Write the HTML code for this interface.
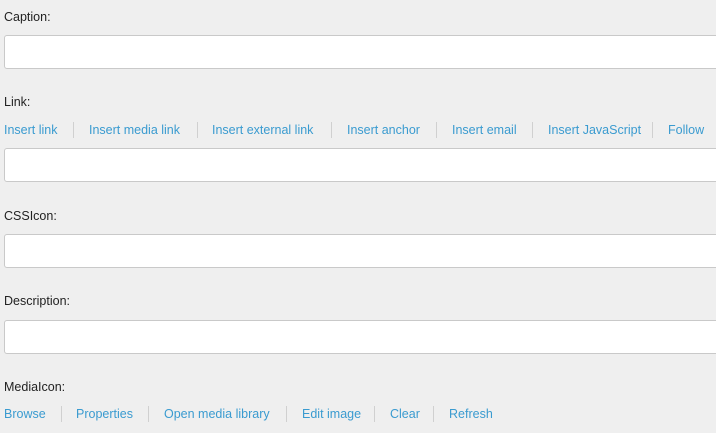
<!DOCTYPE html>
<html><head><style>
body{margin:0;width:716px;height:433px;background:#efefef;font-family:"Liberation Sans",sans-serif;font-size:12.5px;color:#222;position:relative;overflow:hidden}
.l{position:absolute;left:4px;line-height:16px}
.in{position:absolute;left:4px;width:730px;height:32px;background:#fff;border:1px solid #c9c9c9;border-radius:3px}
.a{position:absolute;color:#3a9bd0;line-height:16px;white-space:nowrap}
.s{position:absolute;width:1px;height:16px;background:#d0d0d0}
</style></head><body>
<div class="l" style="top:9px">Caption:</div>
<div class="in" style="top:35px"></div>
<div class="l" style="top:94px">Link:</div>
<span class="a" style="left:4px;top:122px">Insert link</span><i class="s" style="left:73px;top:122px"></i>
<span class="a" style="left:89px;top:122px">Insert media link</span><i class="s" style="left:197px;top:122px"></i>
<span class="a" style="left:212px;top:122px">Insert external link</span><i class="s" style="left:331px;top:122px"></i>
<span class="a" style="left:347px;top:122px">Insert anchor</span><i class="s" style="left:436px;top:122px"></i>
<span class="a" style="left:452px;top:122px">Insert email</span><i class="s" style="left:532px;top:122px"></i>
<span class="a" style="left:548px;top:122px">Insert JavaScript</span><i class="s" style="left:652px;top:122px"></i>
<span class="a" style="left:668px;top:122px">Follow</span>
<div class="in" style="top:148px"></div>
<div class="l" style="top:208px">CSSIcon:</div>
<div class="in" style="top:234px"></div>
<div class="l" style="top:293px">Description:</div>
<div class="in" style="top:320px"></div>
<div class="l" style="top:379px">MediaIcon:</div>
<span class="a" style="left:4px;top:406px">Browse</span><i class="s" style="left:61px;top:406px"></i>
<span class="a" style="left:76px;top:406px">Properties</span><i class="s" style="left:148px;top:406px"></i>
<span class="a" style="left:164px;top:406px">Open media library</span><i class="s" style="left:286px;top:406px"></i>
<span class="a" style="left:302px;top:406px">Edit image</span><i class="s" style="left:374px;top:406px"></i>
<span class="a" style="left:390px;top:406px">Clear</span><i class="s" style="left:433px;top:406px"></i>
<span class="a" style="left:449px;top:406px">Refresh</span>
</body></html>
